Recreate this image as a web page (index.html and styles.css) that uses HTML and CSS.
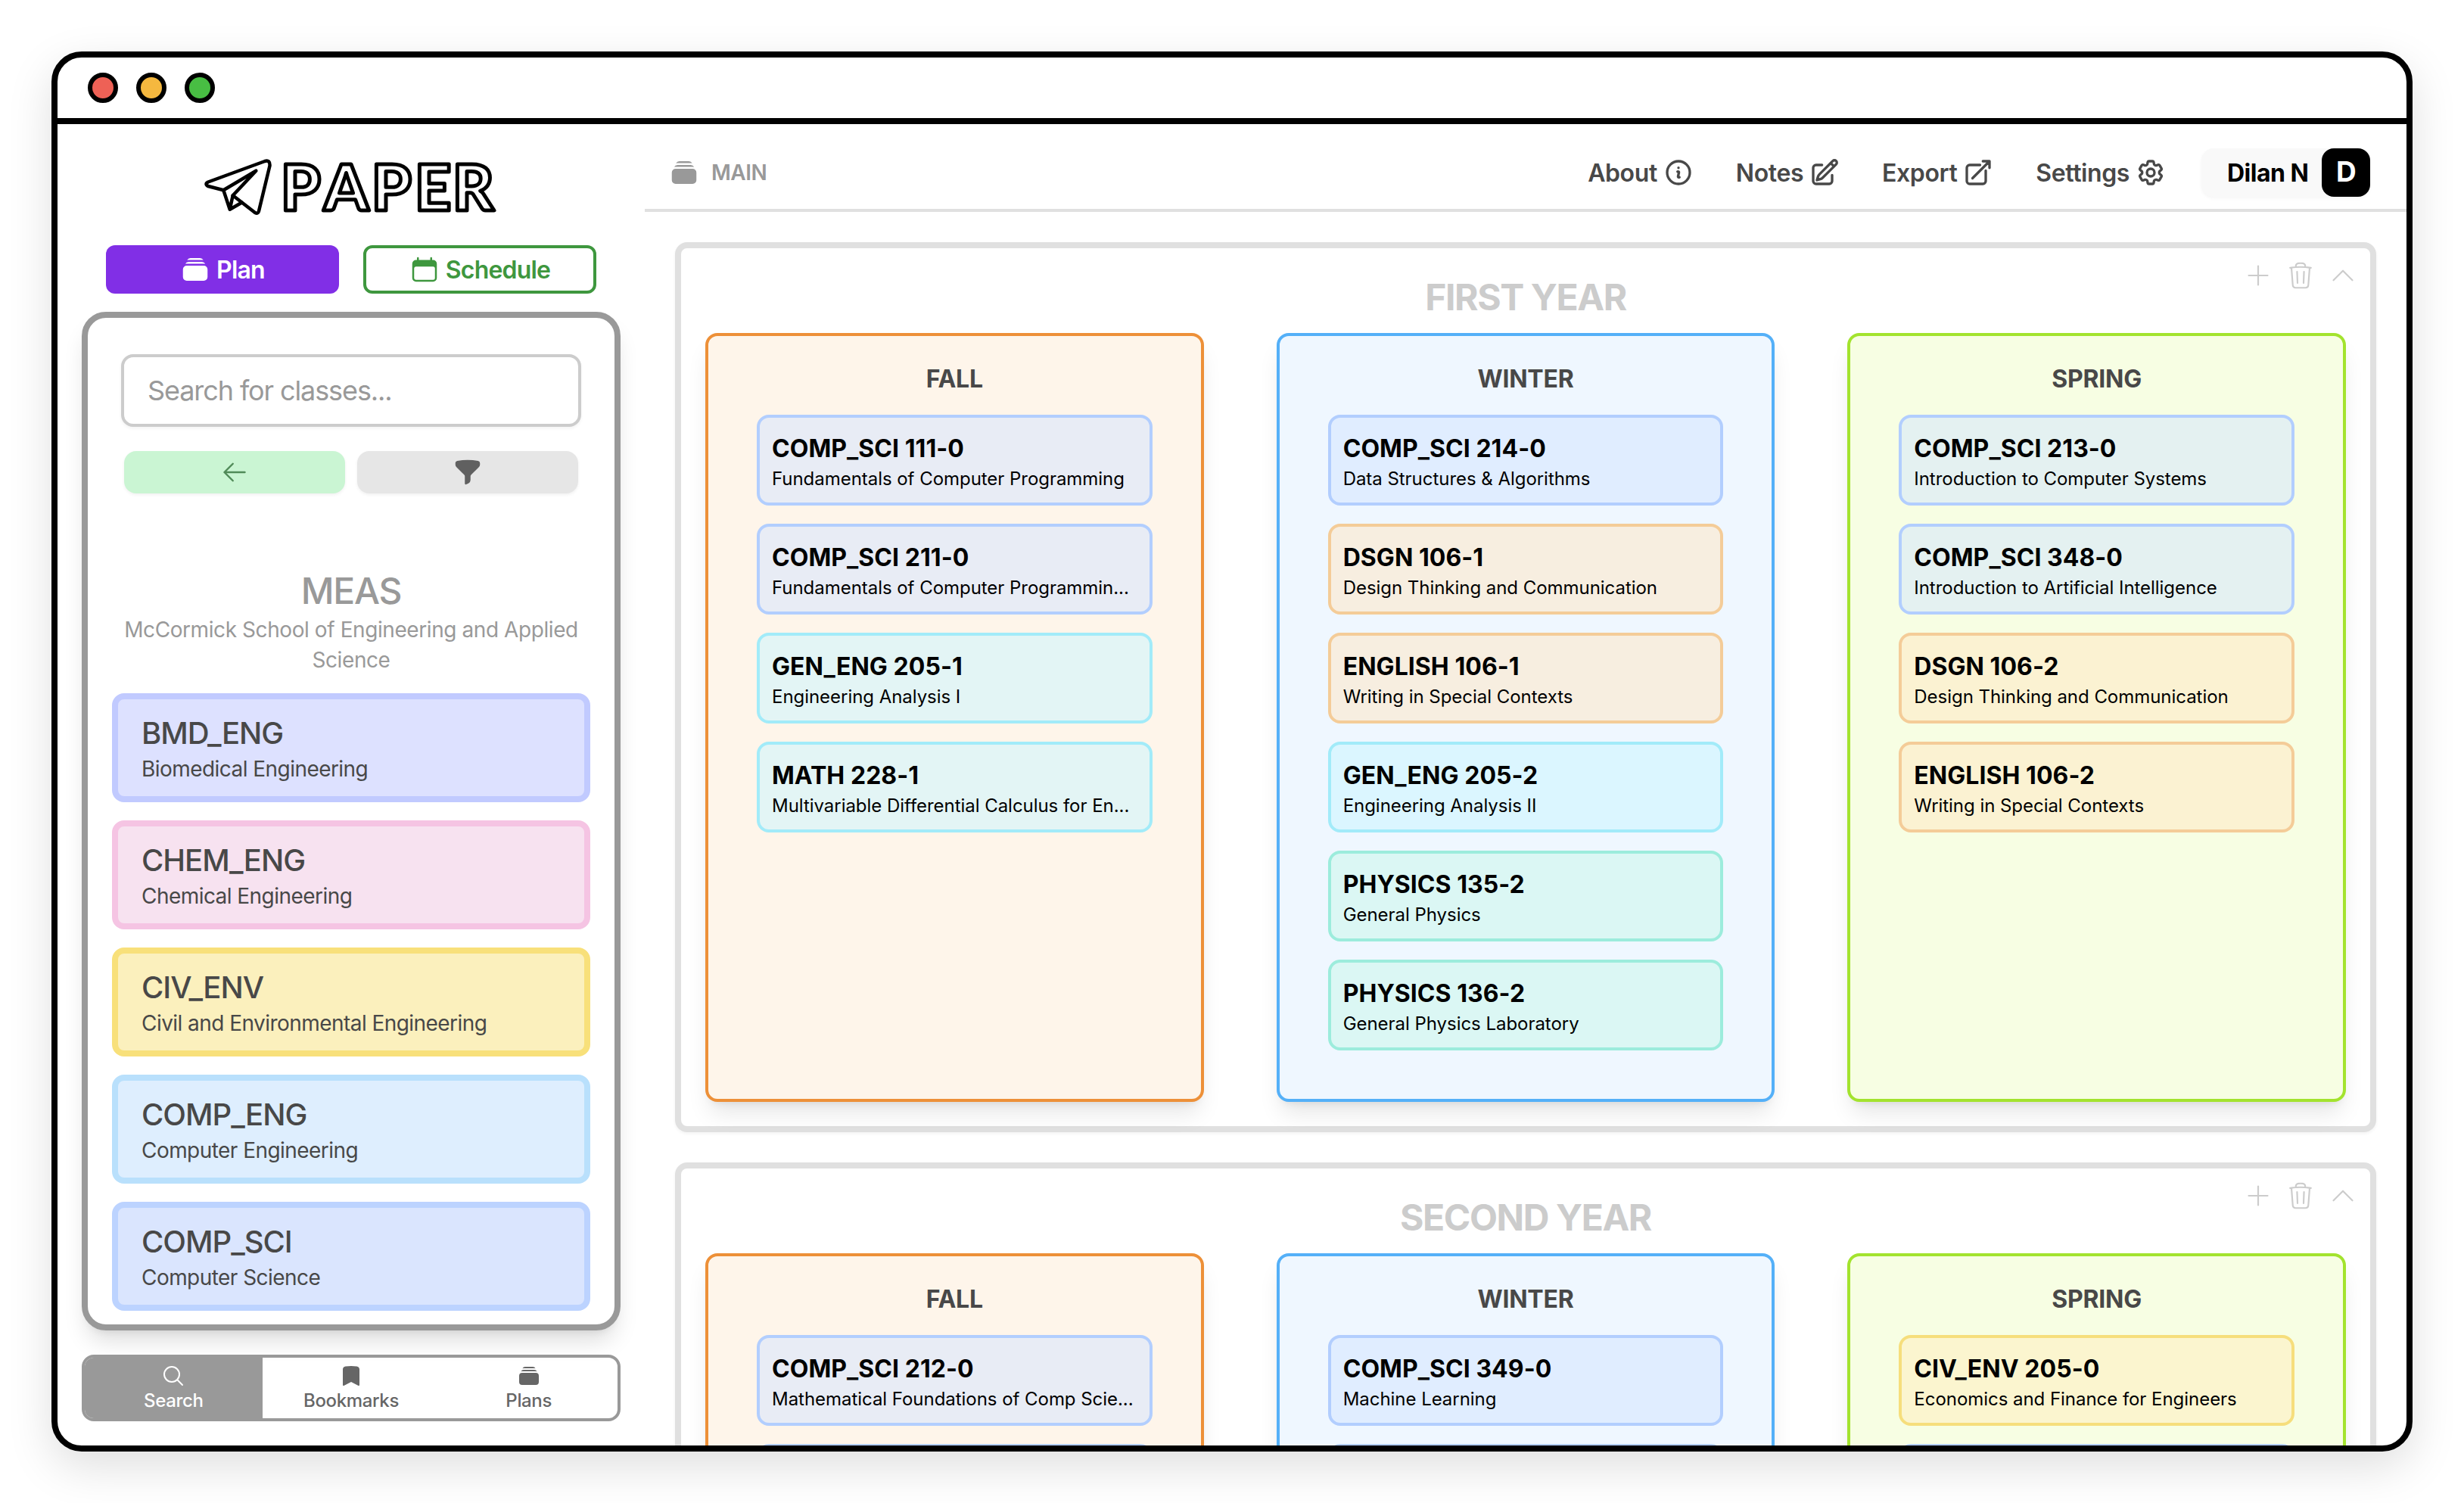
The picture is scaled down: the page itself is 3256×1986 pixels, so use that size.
FILE: index.html
```html
<!DOCTYPE html>
<html lang="en">
<head>
    <meta charset="UTF-8">
    <title>Paper</title>
    <link rel="stylesheet" href="styles.css">
</head>
<body>
    <svg class="sprite" aria-hidden="true">
        <symbol id="stack" viewBox="0 0 24 24">
            <path d="M5.566 4.657A4.505 4.505 0 0 1 6.75 4.5h10.5c.41 0 .806.055 1.183.157A3 3 0 0 0 15.75 3h-7.5a3 3 0 0 0-2.684 1.657ZM2.25 12a3 3 0 0 1 3-3h13.5a3 3 0 0 1 3 3v6a3 3 0 0 1-3 3H5.25a3 3 0 0 1-3-3v-6ZM5.25 7.5c-.41 0-.806.055-1.184.157A3 3 0 0 1 6.75 6h10.5a3 3 0 0 1 2.683 1.657A4.505 4.505 0 0 0 18.75 7.5H5.25Z"/>
        </symbol>
        <symbol id="calendar" viewBox="0 0 24 24">
            <path fill="none" stroke="currentColor" stroke-width="1.5" stroke-linecap="round" stroke-linejoin="round" d="M6.75 3v2.25M17.25 3v2.25M3 18.75V7.5a2.25 2.25 0 0 1 2.25-2.25h13.5A2.25 2.25 0 0 1 21 7.5v11.25m-18 0A2.25 2.25 0 0 0 5.25 21h13.5A2.25 2.25 0 0 0 21 18.75m-18 0v-7.5A2.25 2.25 0 0 1 5.25 9h13.5A2.25 2.25 0 0 1 21 11.25v7.5"/>
            <path d="M3 7.500A2.250 2.250 0 0 1 5.250 5.250h13.500A2.250 2.250 0 0 1 21 7.500v3.750A2.250 2.250 0 0 0 18.750 9H5.250A2.250 2.250 0 0 0 3 11.250Z"/>
        </symbol>
        <symbol id="arrow-left" viewBox="0 0 24 24"><path class="line" d="M10.500 19.500 3 12m0 0 7.500-7.500M3 12h18"/></symbol>
        <symbol id="funnel" viewBox="0 0 24 24"><path d="M3.792 2.938A49.069 49.069 0 0 1 12 2.250c2.797 0 5.540.236 8.209.688a1.857 1.857 0 0 1 1.541 1.836v1.044a3 3 0 0 1-.879 2.121l-6.182 6.182a1.500 1.500 0 0 0-.439 1.061v2.927a3 3 0 0 1-1.658 2.684l-1.757.878A.750.750 0 0 1 9.750 21v-5.818a1.500 1.500 0 0 0-.440-1.060L3.130 7.938a3 3 0 0 1-.879-2.121V4.774c0-.897.640-1.683 1.542-1.836Z"/></symbol>
        <symbol id="search" viewBox="0 0 24 24"><path class="line" d="m21 21-5.197-5.197m0 0A7.500 7.500 0 1 0 5.196 5.196a7.500 7.500 0 0 0 10.607 10.607Z"/></symbol>
        <symbol id="bookmark" viewBox="0 0 24 24"><path d="M6.320 2.577a49.255 49.255 0 0 1 11.360 0c1.497.174 2.570 1.460 2.570 2.930V21a.750.750 0 0 1-1.085.670L12 18.089l-7.165 3.583A.750.750 0 0 1 3.750 21V5.507c0-1.470 1.073-2.756 2.570-2.930Z"/></symbol>
        <symbol id="info" viewBox="0 0 24 24"><path class="line" d="m11.250 11.250.041-.020a.750.750 0 0 1 1.063.852l-.708 2.836a.750.750 0 0 0 1.063.853l.041-.021M21 12a9 9 0 1 1-18 0 9 9 0 0 1 18 0Zm-9-3.750h.008v.008H12V8.250Z"/></symbol>
        <symbol id="pencil" viewBox="0 0 24 24"><path class="line" d="m16.862 4.487 1.687-1.688a1.875 1.875 0 1 1 2.652 2.652L10.582 16.070a4.500 4.500 0 0 1-1.897 1.130L6 18l.800-2.685a4.500 4.500 0 0 1 1.130-1.897l8.932-8.931Zm0 0L19.500 7.125M18 14v4.750A2.250 2.250 0 0 1 15.750 21H5.250A2.250 2.250 0 0 1 3 18.750V8.250A2.250 2.250 0 0 1 5.250 6H10"/></symbol>
        <symbol id="export" viewBox="0 0 24 24"><path class="line" d="M13.500 6H5.250A2.250 2.250 0 0 0 3 8.250v10.500A2.250 2.250 0 0 0 5.250 21h10.500A2.250 2.250 0 0 0 18 18.750V10.500m-10.500 6L21 3m0 0h-5.250M21 3v5.250"/></symbol>
        <symbol id="cog" viewBox="0 0 24 24"><path class="line" d="M9.594 3.940c.090-.542.560-.940 1.110-.940h2.593c.550 0 1.020.398 1.110.940l.213 1.281c.063.374.313.686.645.870.074.040.147.083.220.127.325.196.720.257 1.075.124l1.217-.456a1.125 1.125 0 0 1 1.370.490l1.296 2.247a1.125 1.125 0 0 1-.260 1.431l-1.003.827c-.293.241-.438.613-.430.992a7.723 7.723 0 0 1 0 .255c-.008.378.137.750.430.991l1.004.827c.424.350.534.955.260 1.430l-1.298 2.247a1.125 1.125 0 0 1-1.369.491l-1.217-.456c-.355-.133-.750-.072-1.076.124a6.470 6.470 0 0 1-.220.128c-.331.183-.581.495-.644.869l-.213 1.281c-.090.543-.560.940-1.110.940h-2.594c-.550 0-1.019-.398-1.110-.940l-.213-1.281c-.062-.374-.312-.686-.644-.870a6.520 6.520 0 0 1-.220-.127c-.325-.196-.720-.257-1.076-.124l-1.217.456a1.125 1.125 0 0 1-1.369-.490l-1.297-2.247a1.125 1.125 0 0 1 .260-1.431l1.004-.827c.292-.240.437-.613.430-.991a6.932 6.932 0 0 1 0-.255c.007-.380-.138-.751-.430-.992l-1.004-.827a1.125 1.125 0 0 1-.260-1.430l1.297-2.247a1.125 1.125 0 0 1 1.370-.491l1.216.456c.356.133.751.072 1.076-.124.072-.044.146-.086.220-.128.332-.183.582-.495.644-.869l.214-1.280ZM15 12a3 3 0 1 1-6 0 3 3 0 0 1 6 0Z"/></symbol>
        <symbol id="plus" viewBox="0 0 24 24"><path class="line" d="M12 4.500v15m7.500-7.500h-15"/></symbol>
        <symbol id="trash" viewBox="0 0 24 24"><path class="line" d="m14.740 9-.346 9m-4.788 0L9.260 9m9.968-3.210c.342.052.682.107 1.022.166m-1.022-.165L18.160 19.673a2.250 2.250 0 0 1-2.244 2.077H8.084a2.250 2.250 0 0 1-2.244-2.077L4.772 5.790m14.456 0a48.108 48.108 0 0 0-3.478-.397m-12 .562c.340-.059.680-.114 1.022-.165m0 0a48.110 48.110 0 0 1 3.478-.397m7.500 0v-.916c0-1.180-.910-2.164-2.090-2.201a51.964 51.964 0 0 0-3.320 0c-1.180.037-2.090 1.022-2.090 2.201v.916m7.500 0a48.667 48.667 0 0 0-7.500 0"/></symbol>
        <symbol id="chevron-up" viewBox="0 0 24 24"><path class="line" d="m4.500 15.750 7.500-7.500 7.500 7.500"/></symbol>
    </svg>

    <div class="window">
        <div class="titlebar">
            <span class="dot red"></span>
            <span class="dot yellow"></span>
            <span class="dot green"></span>
        </div>
        <div class="app">
            <aside class="sidebar">
                <svg class="logo" viewBox="0 0 400 84">
                    <g class="plane">
                        <path d="M28.300 45.300 L8 40 Q3 37 8 34.500 L83 7 Q90 5 89.500 13 L75 73 Q74 77 70 75 L40.700 52.300"/>
                        <path d="M28.300 45.300 L71.300 19.700 L40.700 52.300 L36.700 70.700 L28.300 45.300 M36.700 70.700 L52.300 61.700"/>
                    </g>
                    <text class="wordmark" x="104 161 224 281 331" y="71.500">PAPER</text>
                </svg>
                <div class="modes">
                    <button class="mode plan"><svg class="icon"><use href="#stack"/></svg>Plan</button>
                    <button class="mode schedule"><svg class="icon"><use href="#calendar"/></svg>Schedule</button>
                </div>
                <div class="panel">
                    <input class="search-input" type="text" placeholder="Search for classes...">
                    <div class="panel-buttons">
                        <button class="back"><svg class="icon"><use href="#arrow-left"/></svg></button>
                        <button class="filter"><svg class="icon"><use href="#funnel"/></svg></button>
                    </div>
                    <h2 class="school">MEAS</h2>
                    <p class="school-name">McCormick School of Engineering and Applied Science</p>
                    <div class="subjects">
                        <div class="subject indigo"><h3>BMD_ENG</h3><p>Biomedical Engineering</p></div>
                        <div class="subject pink"><h3>CHEM_ENG</h3><p>Chemical Engineering</p></div>
                        <div class="subject yellow"><h3>CIV_ENV</h3><p>Civil and Environmental Engineering</p></div>
                        <div class="subject sky"><h3>COMP_ENG</h3><p>Computer Engineering</p></div>
                        <div class="subject blue"><h3>COMP_SCI</h3><p>Computer Science</p></div>
                    </div>
                </div>
                <nav class="tabs">
                    <a class="tab active"><svg class="icon"><use href="#search"/></svg>Search</a>
                    <a class="tab"><svg class="icon"><use href="#bookmark"/></svg>Bookmarks</a>
                    <a class="tab"><svg class="icon"><use href="#stack"/></svg>Plans</a>
                </nav>
            </aside>

            <main class="main">
                <header class="header">
                    <div class="plan-name"><svg class="icon"><use href="#stack"/></svg>MAIN</div>
                    <nav class="links">
                        <a class="link about"><span>About</span><svg class="icon"><use href="#info"/></svg></a>
                        <a class="link notes"><span>Notes</span><svg class="icon"><use href="#pencil"/></svg></a>
                        <a class="link export"><span>Export</span><svg class="icon"><use href="#export"/></svg></a>
                        <a class="link settings"><span>Settings</span><svg class="icon"><use href="#cog"/></svg></a>
                        <a class="user"><span class="user-name">Dilan N</span><span class="avatar">D</span></a>
                    </nav>
                </header>

                <section class="year">
                    <div class="year-tools">
                        <svg class="icon"><use href="#plus"/></svg>
                        <svg class="icon"><use href="#trash"/></svg>
                        <svg class="icon"><use href="#chevron-up"/></svg>
                    </div>
                    <h2 class="year-title">FIRST YEAR</h2>
                    <div class="quarters">
                        <div class="quarter fall">
                            <h3 class="quarter-title">FALL</h3>
                            <div class="course blue"><h4>COMP_SCI 111-0</h4><p>Fundamentals of Computer Programming</p></div>
                            <div class="course blue"><h4>COMP_SCI 211-0</h4><p>Fundamentals of Computer Programmin...</p></div>
                            <div class="course cyan"><h4>GEN_ENG 205-1</h4><p>Engineering Analysis I</p></div>
                            <div class="course cyan"><h4>MATH 228-1</h4><p>Multivariable Differential Calculus for En...</p></div>
                        </div>
                        <div class="quarter winter">
                            <h3 class="quarter-title">WINTER</h3>
                            <div class="course blue"><h4>COMP_SCI 214-0</h4><p>Data Structures &amp; Algorithms</p></div>
                            <div class="course orange"><h4>DSGN 106-1</h4><p>Design Thinking and Communication</p></div>
                            <div class="course orange"><h4>ENGLISH 106-1</h4><p>Writing in Special Contexts</p></div>
                            <div class="course cyan"><h4>GEN_ENG 205-2</h4><p>Engineering Analysis II</p></div>
                            <div class="course teal"><h4>PHYSICS 135-2</h4><p>General Physics</p></div>
                            <div class="course teal"><h4>PHYSICS 136-2</h4><p>General Physics Laboratory</p></div>
                        </div>
                        <div class="quarter spring">
                            <h3 class="quarter-title">SPRING</h3>
                            <div class="course blue"><h4>COMP_SCI 213-0</h4><p>Introduction to Computer Systems</p></div>
                            <div class="course blue"><h4>COMP_SCI 348-0</h4><p>Introduction to Artificial Intelligence</p></div>
                            <div class="course orange"><h4>DSGN 106-2</h4><p>Design Thinking and Communication</p></div>
                            <div class="course orange"><h4>ENGLISH 106-2</h4><p>Writing in Special Contexts</p></div>
                        </div>
                    </div>
                </section>

                <section class="year">
                    <div class="year-tools">
                        <svg class="icon"><use href="#plus"/></svg>
                        <svg class="icon"><use href="#trash"/></svg>
                        <svg class="icon"><use href="#chevron-up"/></svg>
                    </div>
                    <h2 class="year-title">SECOND YEAR</h2>
                    <div class="quarters">
                        <div class="quarter fall">
                            <h3 class="quarter-title">FALL</h3>
                            <div class="course blue"><h4>COMP_SCI 212-0</h4><p>Mathematical Foundations of Comp Scie...</p></div>
                            <div class="course blue"></div>
                        </div>
                        <div class="quarter winter">
                            <h3 class="quarter-title">WINTER</h3>
                            <div class="course blue"><h4>COMP_SCI 349-0</h4><p>Machine Learning</p></div>
                            <div class="course blue"></div>
                        </div>
                        <div class="quarter spring">
                            <h3 class="quarter-title">SPRING</h3>
                            <div class="course yellow"><h4>CIV_ENV 205-0</h4><p>Economics and Finance for Engineers</p></div>
                            <div class="course blue"></div>
                        </div>
                    </div>
                </section>
            </main>
        </div>
    </div>
</body>
</html>
```

FILE: styles.css
```css
* {
    box-sizing: border-box;
}
body {
    margin: 0;
    padding: 68px;
    height: 1986px;
    overflow: hidden;
    background: #fff;
    font-family: Inter, "Liberation Sans", sans-serif;
    color: #000;
}
h2, h3, h4, p {
    margin: 0;
}
button, input {
    font-family: inherit;
    border: none;
    padding: 0;
}
.sprite {
    display: none;
}
.icon {
    width: 40px;
    height: 40px;
    fill: currentColor;
    flex-shrink: 0;
}
.line {
    fill: none;
    stroke: currentColor;
    stroke-width: var(--line, 1.5);
    stroke-linecap: round;
    stroke-linejoin: round;
}

/* window */
.window {
    width: 3120px;
    height: 1850px;
    border: 8px solid #000;
    border-radius: 40px;
    overflow: hidden;
    background: #fff;
    box-shadow: 0 20px 60px rgba(0, 0, 0, 0.13);
    display: flex;
    flex-direction: column;
}
.titlebar {
    height: 88px;
    flex-shrink: 0;
    border-bottom: 8px solid #000;
    display: flex;
    align-items: center;
    gap: 24px;
    padding-left: 40px;
}
.dot {
    width: 40px;
    height: 40px;
    border: 6px solid #000;
    border-radius: 50%;
}
.dot.red { background: #ee6156; }
.dot.yellow { background: #f5b83f; }
.dot.green { background: #48be43; }
.app {
    display: flex;
    flex: 1;
    min-height: 0;
}

/* sidebar */
.sidebar {
    width: 776px;
    padding: 42px 32px 32px;
    display: flex;
    flex-direction: column;
}
.logo {
    width: 400px;
    height: 84px;
    margin-left: 159px;
    flex-shrink: 0;
    overflow: visible;
}
.plane path {
    fill: none;
    stroke: #000;
    stroke-width: 4.5;
    stroke-linejoin: round;
    stroke-linecap: round;
}
.wordmark {
    font-family: Lato, sans-serif;
    font-size: 84px;
    font-weight: 900;
    fill: #fff;
    stroke: #000;
    stroke-width: 5;
    stroke-linejoin: round;
}
.modes {
    display: flex;
    gap: 32px;
    margin-top: 34px;
    padding: 0 32px;
}
.mode {
    width: 308px;
    height: 64px;
    border-radius: 12px;
    display: flex;
    align-items: center;
    justify-content: center;
    gap: 8px;
    font-size: 32px;
    font-weight: 600;
    letter-spacing: -0.8px;
}
.plan {
    background: #812fe6;
    color: #fff;
}
.schedule {
    background: #fff;
    color: #3e973e;
    border: 4px solid #3e973e;
}
.panel {
    height: 1346px;
    margin-top: 24px;
    border: 8px solid #999;
    border-radius: 32px;
    padding: 48px 32px 0;
    box-shadow: 0 20px 30px -6px rgba(0, 0, 0, 0.13), 0 8px 12px -8px rgba(0, 0, 0, 0.1);
}
.search-input {
    display: block;
    width: 608px;
    height: 96px;
    margin: 0 12px;
    padding: 0 31px;
    border: 4px solid #ccc;
    border-radius: 16px;
    font-size: 36px;
    letter-spacing: -1.1px;
    box-shadow: 0 2px 4px rgba(0, 0, 0, 0.05);
}
.search-input::placeholder {
    color: #999;
}
.panel-buttons {
    display: flex;
    gap: 16px;
    margin: 32px 16px 0;
}
.back, .filter {
    flex: 1;
    height: 56px;
    border-radius: 16px;
    display: flex;
    align-items: center;
    justify-content: center;
    box-shadow: 0 2px 4px rgba(0, 0, 0, 0.06);
}
.back {
    background: #caf5d3;
    color: #508a58;
    --line: 1.6;
}
.filter {
    background: #e6e6e6;
    color: #606060;
}
.back .icon {
    width: 36px;
    height: 36px;
}
.school {
    margin-top: 97px;
    text-align: center;
    font-size: 48px;
    line-height: 63px;
    font-weight: 500;
    letter-spacing: -1.3px;
    color: #999;
}
.school-name {
    text-align: center;
    font-size: 28px;
    line-height: 40px;
    letter-spacing: -0.42px;
    color: #999;
}
.subjects {
    margin-top: 24px;
    display: flex;
    flex-direction: column;
    gap: 24px;
}
.subject {
    height: 144px;
    border: 8px solid;
    border-radius: 16px;
    padding: 17px 31px;
    color: #484848;
}
.subject h3 {
    font-size: 40px;
    line-height: 56px;
    font-weight: 550;
    letter-spacing: -1px;
}
.subject p {
    font-size: 28px;
    line-height: 38px;
    letter-spacing: -0.55px;
}
.subject.indigo { background: #dde1ff; border-color: #c1caff; }
.subject.pink { background: #f7e2f0; border-color: #f5c4e3; }
.subject.yellow { background: #fbf0bd; border-color: #f8e07a; }
.subject.sky { background: #deeefe; border-color: #b9e0fc; }
.subject.blue { background: #dae5fe; border-color: #bcd3ff; }
.tabs {
    display: flex;
    height: 88px;
    margin-top: 32px;
    border: 4px solid #999;
    border-radius: 16px;
    overflow: hidden;
}
.tab {
    flex: 1;
    display: flex;
    flex-direction: column;
    align-items: center;
    padding-top: 8px;
    font-size: 24px;
    line-height: 34px;
    font-weight: 500;
    letter-spacing: -0.35px;
    color: #666;
}
.tab .icon {
    width: 32px;
    height: 32px;
}
.tab.active {
    background: #999;
    color: #fff;
}

/* header */
.main {
    flex: 1;
    min-width: 0;
}
.header {
    height: 116px;
    border-bottom: 4px solid #e0e0e0;
    display: flex;
    align-items: center;
    justify-content: space-between;
    padding: 32px 48px 16px 32px;
}
.plan-name {
    display: flex;
    align-items: center;
    gap: 16px;
    font-size: 28px;
    font-weight: 600;
    letter-spacing: -0.5px;
    color: #999;
}
.links {
    display: flex;
    align-items: center;
}
.link {
    display: flex;
    align-items: center;
    gap: 8px;
    margin-right: 56px;
    font-size: 32px;
    font-weight: 570;
    letter-spacing: -0.4px;
    color: #484848;
    --line: 2;
}
.settings {
    margin-right: 47px;
}
.user {
    display: flex;
    align-items: center;
    height: 64px;
    padding-left: 34px;
    border-radius: 16px;
    background: #f9f9f9;
    box-shadow: 0 2px 4px rgba(0, 0, 0, 0.04);
    font-size: 32px;
    font-weight: 700;
    letter-spacing: -0.5px;
}
.user-name {
    width: 125px;
    white-space: nowrap;
}
.avatar {
    width: 64px;
    height: 64px;
    border-radius: 16px;
    background: #000;
    color: #fff;
    font-size: 37px;
    font-weight: 700;
    line-height: 61px;
    text-align: center;
}

/* years */
.year {
    position: relative;
    height: 1176px;
    margin: 40px 40px 0;
    padding: 32px;
    border: 8px solid #e0e0e0;
    border-radius: 16px;
    box-shadow: 0 2px 4px rgba(0, 0, 0, 0.05);
}
.year-tools {
    position: absolute;
    top: 16px;
    right: 16px;
    display: flex;
    gap: 16px;
    color: #ccc;
    --line: 1.3;
}
.year-title {
    height: 80px;
    line-height: 66px;
    text-align: center;
    font-size: 48px;
    font-weight: 700;
    letter-spacing: -1.4px;
    color: #ccc;
}
.quarters {
    display: grid;
    grid-template-columns: repeat(3, 1fr);
    gap: 96px;
}
.quarter {
    min-width: 0;
    height: 1016px;
    padding: 32px 64px 0;
    border: 4px solid;
    border-radius: 16px;
    box-shadow: 0 20px 30px -6px rgba(0, 0, 0, 0.1), 0 8px 12px -8px rgba(0, 0, 0, 0.1);
}
.quarter.fall { background: #fef5ea; border-color: #ed9038; }
.quarter.winter { background: #eff7ff; border-color: #54b0f8; }
.quarter.spring { background: #f7fee3; border-color: #a3e32e; }
.quarter-title {
    height: 72px;
    line-height: 50px;
    text-align: center;
    font-size: 32px;
    font-weight: 700;
    letter-spacing: -0.2px;
    color: #484848;
}
.course {
    height: 120px;
    margin-bottom: 24px;
    padding: 21px 16px;
    border: 4px solid;
    border-radius: 16px;
}
.course h4 {
    font-size: 32px;
    line-height: 40px;
    font-weight: 700;
    letter-spacing: 0.05px;
}
.course p {
    font-size: 24px;
    line-height: 40px;
    letter-spacing: -0.04px;
    white-space: nowrap;
}
.course.blue { background: rgba(210, 228, 255, 0.5); border-color: #b2cefe; }
.course.cyan { background: rgba(200, 246, 255, 0.5); border-color: #a2ebf9; }
.course.orange { background: rgba(255, 229, 193, 0.5); border-color: #f4cc98; }
.course.teal { background: rgba(200, 248, 234, 0.5); border-color: #9cecdc; }
.course.yellow { background: #fbf5cf; border-color: #f6de7c; }
```
